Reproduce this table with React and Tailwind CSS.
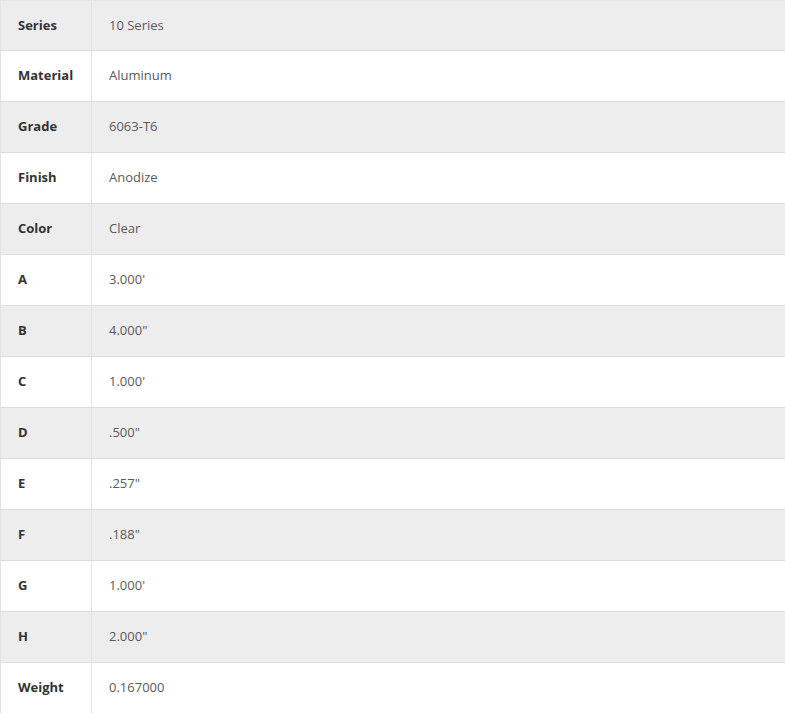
const rows = [
  ["Series", "10 Series"],
  ["Material", "Aluminum"],
  ["Grade", "6063-T6"],
  ["Finish", "Anodize"],
  ["Color", "Clear"],
  ["A", "3.000'"],
  ["B", "4.000\""],
  ["C", "1.000'"],
  ["D", ".500\""],
  ["E", ".257\""],
  ["F", ".188\""],
  ["G", "1.000'"],
  ["H", "2.000\""],
  ["Weight", "0.167000"],
];

export default function App() {
  return (
    <div className="w-[785px] h-[713px] overflow-hidden bg-white" style={{ fontFamily: '"Open Sans", sans-serif' }}>
      {rows.map(([k, v], i) => (
        <div
          key={k}
          className={`flex h-[51px] shrink-0 border-b border-[#dddddd] ${i === 0 ? "border-t border-t-[#e6e6e6]" : ""} ${i % 2 === 0 ? "bg-[#ededed]" : "bg-white"}`}
        >
          <div className="w-[92px] shrink-0 border-r border-l border-[#e2e2e2] flex items-center pl-[17px] text-[13px] font-bold text-[#333333]">
            {k}
          </div>
          <div className="flex-1 flex items-center pl-[17px] text-[13px] text-[#5a5a5a]">{v}</div>
        </div>
      ))}
    </div>
  );
}
